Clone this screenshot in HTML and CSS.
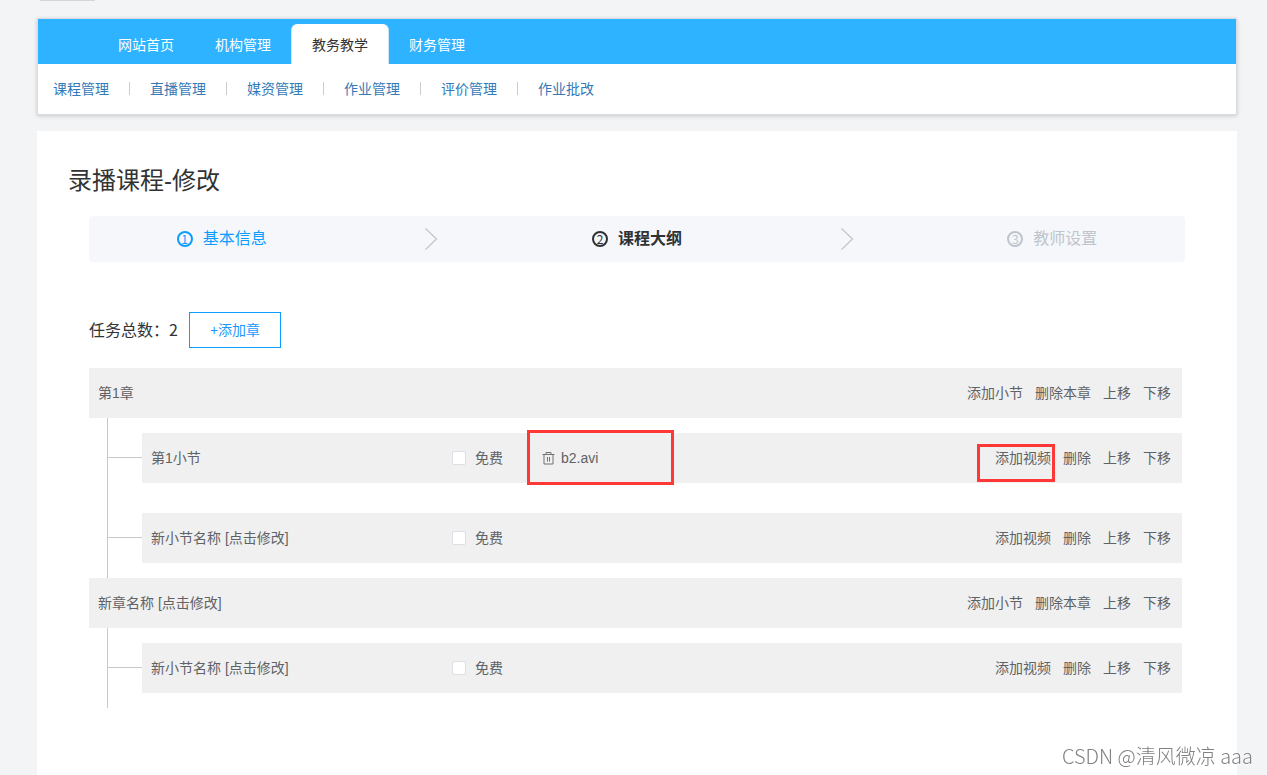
FILE: index.html
```
<!DOCTYPE html>
<html lang="zh-CN">
<head>
<meta charset="utf-8">
<title>录播课程-修改</title>
<link rel="stylesheet" href="styles.css">
</head>
<body>
<div class="page">
  <div class="top-line"></div>
  <header class="header">
    <nav class="tabs">
      <a class="tab" href="#">网站首页</a>
      <a class="tab" href="#">机构管理</a>
      <a class="tab tab-active" href="#">教务教学</a>
      <a class="tab" href="#">财务管理</a>
    </nav>
    <nav class="subnav">
      <a class="subnav-link" href="#">课程管理</a>
      <a class="subnav-link" href="#">直播管理</a>
      <a class="subnav-link" href="#">媒资管理</a>
      <a class="subnav-link" href="#">作业管理</a>
      <a class="subnav-link" href="#">评价管理</a>
      <a class="subnav-link" href="#">作业批改</a>
    </nav>
  </header>
  <main class="panel">
    <h1 class="title">录播课程-修改</h1>
    <div class="content">
      <ol class="steps">
        <li class="step step-done"><span class="step-num">1</span>基本信息</li>
        <li class="arrow" aria-hidden="true"><svg width="14" height="24" viewBox="0 0 14 24"><path d="M1.500 1.500L12.500 12L1.500 22.500" fill="none" stroke="#c0c4cc" stroke-width="1.200"/></svg></li>
        <li class="step step-current"><span class="step-num">2</span>课程大纲</li>
        <li class="arrow" aria-hidden="true"><svg width="14" height="24" viewBox="0 0 14 24"><path d="M1.500 1.500L12.500 12L1.500 22.500" fill="none" stroke="#c0c4cc" stroke-width="1.200"/></svg></li>
        <li class="step"><span class="step-num">3</span>教师设置</li>
      </ol>
      <div class="toolbar">
        <span class="total">任务总数：2</span>
        <button class="add" type="button">+添加章</button>
      </div>
      <div class="outline">
        <section>
          <div class="row chapter">
            <span>第1章</span>
            <div class="actions">
              <button type="button">添加小节</button><button type="button">删除本章</button><button type="button">上移</button><button type="button">下移</button>
            </div>
          </div>
          <div class="branch">
            <div class="node">
              <div class="row lesson">
                <span>第1小节</span>
                <label class="free"><input type="checkbox">免费</label>
                <div class="file">
                  <button class="trash" type="button" aria-label="删除视频"><svg width="14" height="14" viewBox="0 0 14 14" fill="none" stroke="#707276"><path d="M0.500 3.500H12.500M4 3V1.500H9V3M2 3.500V13H11V3.500M5.500 6V10.500M7.500 6V10.500"/></svg></button>
                  <span>b2.avi</span>
                  <span class="mark mark-file"></span>
                </div>
                <div class="actions">
                  <button class="marked" type="button">添加视频<span class="mark mark-video"></span></button><button type="button">删除</button><button type="button">上移</button><button type="button">下移</button>
                </div>
              </div>
            </div>
            <div class="node">
              <div class="row lesson">
                <span>新小节名称 [点击修改]</span>
                <label class="free"><input type="checkbox">免费</label>
                <div class="file"></div>
                <div class="actions">
                  <button type="button">添加视频</button><button type="button">删除</button><button type="button">上移</button><button type="button">下移</button>
                </div>
              </div>
            </div>
          </div>
        </section>
        <section>
          <div class="row chapter">
            <span>新章名称 [点击修改]</span>
            <div class="actions">
              <button type="button">添加小节</button><button type="button">删除本章</button><button type="button">上移</button><button type="button">下移</button>
            </div>
          </div>
          <div class="branch">
            <div class="node">
              <div class="row lesson">
                <span>新小节名称 [点击修改]</span>
                <label class="free"><input type="checkbox">免费</label>
                <div class="file"></div>
                <div class="actions">
                  <button type="button">添加视频</button><button type="button">删除</button><button type="button">上移</button><button type="button">下移</button>
                </div>
              </div>
            </div>
          </div>
        </section>
      </div>
    </div>
  </main>
</div>
<div class="watermark">CSDN @清风微凉 aaa</div>
</body>
</html>
```
FILE: styles.css
```
* { box-sizing: border-box; }

body {
  margin: 0;
  background: #f3f4f6;
  color: #333;
  font: 14px/20px "Liberation Sans", "Noto Sans CJK SC", sans-serif;
}

a { text-decoration: none; }

button {
  padding: 0;
  border: 0;
  background: none;
  color: inherit;
  font: inherit;
  cursor: pointer;
}

.page {
  display: flex;
  flex-direction: column;
  min-height: 100vh;
  padding: 0 30px 0 37px;
}

.top-line {
  width: 55px;
  height: 1px;
  margin: 0 3px 17px;
  background: #d5d6da;
}

.header {
  border: 1px solid #d9dce3;
  background: #fff;
  box-shadow: 0 1px 4px rgba(0, 0, 0, 0.18);
}

.tabs {
  display: flex;
  gap: 1px;
  padding: 5px 60px 0;
  background: #2db3ff;
}

.tab {
  padding: 11px 20px 9px;
  border-radius: 6px 6px 0 0;
  color: #fff;
}

.tab-active {
  background: #fff;
  box-shadow: -1px 0 #cfe3f2, 1px 0 #cfe3f2;
  color: #333;
}

.subnav {
  display: flex;
  align-items: center;
  height: 50px;
  padding: 0 15px;
}

.subnav-link {
  display: flex;
  align-items: center;
  color: #337ab7;
}

.subnav-link:not(:last-child)::after {
  content: "";
  width: 1px;
  height: 13px;
  margin: 0 20px 2px;
  background: #ccc;
}

.panel {
  flex: 1;
  margin-top: 16px;
  padding: 32px 52px 60px;
  background: #fff;
}

.title {
  margin: 0 0 17px -21px;
  font-size: 24px;
  font-weight: 400;
  line-height: 36px;
}

.steps {
  display: flex;
  align-items: center;
  justify-content: space-between;
  height: 46px;
  margin: 0;
  padding: 0 8%;
  border-radius: 4px;
  background: #f5f7fb;
  list-style: none;
  font-size: 16px;
}

.step {
  display: flex;
  align-items: center;
  gap: 10px;
  color: #c0c4cc;
}

.step-num {
  display: flex;
  align-items: center;
  justify-content: center;
  width: 16px;
  height: 16px;
  border: 2px solid;
  border-radius: 50%;
  font: 12px/12px "Noto Sans CJK SC", sans-serif;
}

.step-done { color: #0c9dff; }

.step-current {
  color: #303133;
  font-weight: 700;
}

.arrow {
  display: flex;
  padding-left: 4px;
}

.toolbar {
  display: flex;
  align-items: center;
  gap: 11px;
  margin: 50px 0 20px;
}

.total {
  padding-bottom: 2px;
  font: 16px/24px "Noto Sans CJK SC", sans-serif;
}

.add {
  height: 36px;
  padding: 0 20px;
  border: 1px solid #0c9dff;
  background: #fff;
  color: #1b98ff;
}

.outline {
  margin-right: 3px;
  color: #606266;
}

.row {
  display: grid;
  align-items: center;
  min-height: 50px;
  padding: 0 11px 0 9px;
  background: #f0f0f0;
}

.chapter { grid-template-columns: 1fr auto; }

.lesson {
  flex: 1;
  grid-template-columns: 301px 90px 1fr auto;
}

.branch {
  margin-left: 18px;
  border-left: 1px solid #c8c8c8;
}

.node {
  display: flex;
  align-items: center;
  padding: 15px 0;
}

.node::before {
  content: "";
  width: 34px;
  height: 1px;
  margin-bottom: 2px;
  background: #c8c8c8;
}

.actions {
  display: flex;
  gap: 12px;
}

.free {
  display: flex;
  align-items: center;
  gap: 9px;
}

.free input {
  appearance: none;
  width: 14px;
  height: 14px;
  margin: 0;
  border: 1px solid #dcdfe6;
  border-radius: 2px;
  background: #fff;
}

.file {
  position: relative;
  display: flex;
  align-items: center;
  gap: 5px;
}

.trash { display: flex; }

.marked { position: relative; }

.mark {
  position: absolute;
  border: 3px solid #fd3837;
  pointer-events: none;
}

.mark-file {
  top: -18px;
  left: -15px;
  width: 147px;
  height: 55px;
}

.mark-video {
  top: -4px;
  left: -18px;
  width: 78px;
  height: 38px;
}

.watermark {
  position: fixed;
  right: 14px;
  bottom: 4px;
  color: #808185;
  font: 300 20px/30px "Noto Sans CJK SC", sans-serif;
  text-shadow: 1px 1px #fff;
}
```
